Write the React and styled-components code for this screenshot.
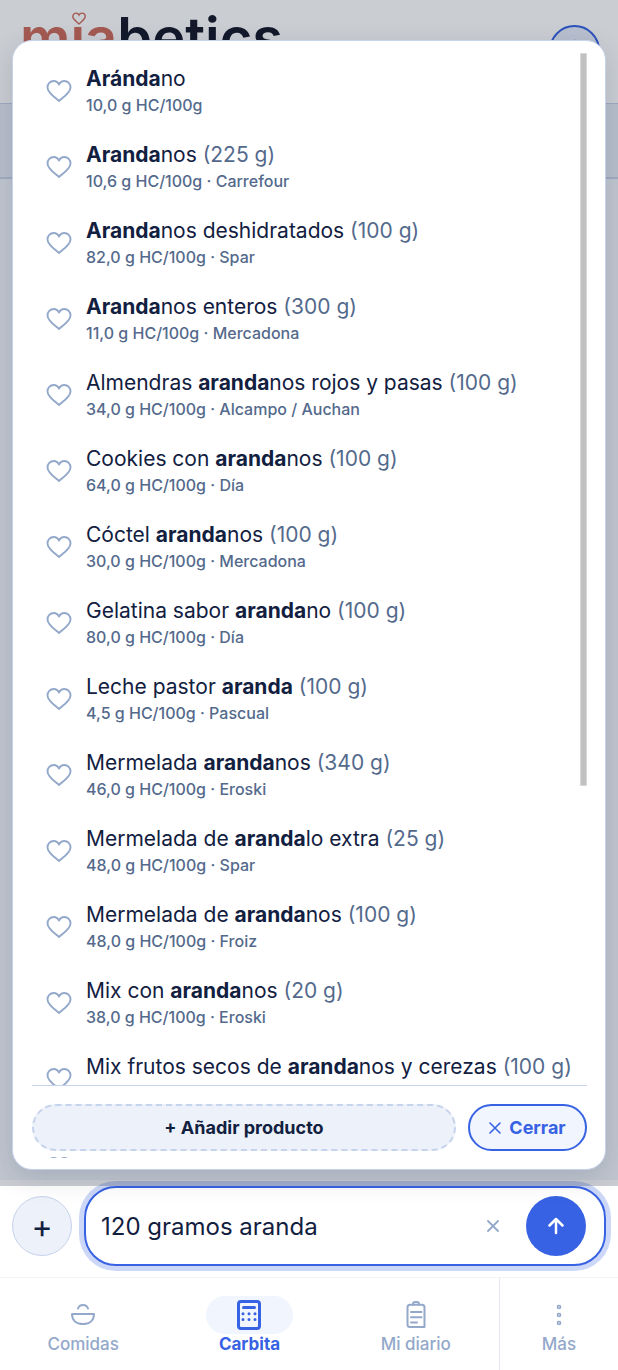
import React from 'react'
import styled, {createGlobalStyle, css} from 'styled-components'

const colors = {
	ink: '#12203f',
	muted: '#546a8c',
	soft: '#93a8ca',
	blue: '#3762e3',
	tint: '#ecf1fa',
	pale: '#f0f5fe',
	line: '#c6d3ec',
}

const Global = createGlobalStyle`
	*, *::before, *::after {
		box-sizing: border-box;
	}
	body {
		margin: 0;
		color: ${colors.ink};
		background: #fff;
		font-family: Inter, "Liberation Sans", sans-serif;
	}
	button, input {
		font: inherit;
		color: inherit;
	}
	button {
		cursor: pointer;
		padding: 0;
	}
	svg {
		display: block;
		flex: none;
	}
`

const Page = styled.div`
	display: flex;
	flex-direction: column;
	height: 100vh;
`

const Stage = styled.div`
	position: relative;
	display: flex;
	flex-direction: column;
	flex: 1;
	min-height: 0;
	background: #f2f6fc;
`

const Header = styled.header`
	display: flex;
	align-items: flex-start;
	justify-content: space-between;
	height: 104px;
	padding: 8px 18px 0 20px;
	background: #fff;
	border-bottom: 1px solid ${colors.line};
`

const Brand = styled.a`
	position: relative;
	color: #15192a;
	font-size: 56px;
	font-weight: 600;
	line-height: 60px;
	text-decoration: none;
`

const BrandAccent = styled.span`
	color: #cf6c5b;
`

const BrandHeart = styled.svg`
	position: absolute;
	top: 4px;
	left: 52px;
`

const Profile = styled.button`
	display: grid;
	place-items: center;
	width: 51px;
	height: 51px;
	margin-top: 17px;
	border: 2px solid ${colors.blue};
	border-radius: 50%;
	color: ${colors.blue};
	background: #e8effc;
`

const Band = styled.div`
	height: 75px;
	background: #e8eef7;
	border-bottom: 2px solid #c9d5e9;
`

const Shade = styled.div`
	position: absolute;
	z-index: 2;
	inset: 0 0 -6px;
	background: rgba(15, 26, 50, 0.22);
	pointer-events: none;
`

const Panel = styled.section`
	position: absolute;
	z-index: 3;
	inset: 40px 12px 10px;
	display: flex;
	padding: 12px 18px 11px 19px;
	border: 1px solid ${colors.line};
	border-radius: 20px;
	background: #fff;
	box-shadow: 0 8px 28px rgba(15, 26, 58, 0.14);
`

const Scroller = styled.div`
	position: relative;
	flex: 1;
	overflow-y: auto;
	scrollbar-width: none;
`

const Thumb = styled.div`
	position: absolute;
	top: 12px;
	right: 18px;
	width: 7px;
	height: 733px;
	border: 1px solid #d8d8d8;
	background: #c1c1c1;
`

const List = styled.ul`
	margin: 0;
	padding: 0;
	list-style: none;
`

const Row = styled.li`
	display: flex;
	align-items: center;
	gap: 14px;
	height: ${p => (p.$tall ? 102 : 76)}px;
	padding-left: 14px;
`

const Favorite = styled.button`
	border: 0;
	color: ${colors.soft};
	background: none;
`

const Name = styled.div`
	font-size: 21px;
	line-height: 28px;
	white-space: nowrap;
	b {
		font-weight: 700;
	}
`

const Amount = styled.span`
	color: ${colors.muted};
`

const Detail = styled.div`
	color: ${colors.muted};
	font-size: 16px;
	font-weight: 500;
	line-height: 24px;
`

const Actions = styled.div`
	position: sticky;
	bottom: 1px;
	display: flex;
	gap: 12px;
	padding: 18px 0 6px;
	border-top: 1px solid ${colors.line};
	background: #fff;
`

const Pill = styled.button`
	display: flex;
	align-items: center;
	justify-content: center;
	gap: 8px;
	height: 47px;
	border-radius: 24px;
	font-size: 18px;
	font-weight: 700;
	${p =>
		p.$close
			? css`
				width: 119px;
				border: 2px solid ${colors.blue};
				color: ${colors.blue};
				background: ${colors.pale};
			`
			: css`
				flex: 1;
				border: 2px dashed ${colors.line};
				background: ${colors.tint};
			`};
`

const Composer = styled.form`
	display: flex;
	gap: 12px;
	padding: 6px 12px 11px;
`

const Round = styled.button`
	display: grid;
	place-items: center;
	flex: none;
	width: 60px;
	height: 60px;
	border: ${p => (p.$send ? '0' : `1px solid ${colors.line}`)};
	border-radius: 50%;
	color: ${p => (p.$send ? '#fff' : colors.ink)};
	background: ${p => (p.$send ? colors.blue : colors.tint)};
`

const Add = styled(Round)`
	margin-top: 10px;
	font-size: 32px;
	font-weight: 400;
`

const Field = styled.div`
	display: flex;
	align-items: center;
	flex: 1;
	min-width: 0;
	height: 80px;
	padding: 0 18px 0 15px;
	border: 2px solid ${colors.blue};
	border-radius: 32px;
	background: #fff;
	box-shadow: 0 0 0 5px #cdd8f8;
`

const Input = styled.input`
	flex: 1;
	min-width: 0;
	padding: 0;
	border: 0;
	outline: 0;
	font-size: 24px;
	background: none;
`

const Clear = styled.button`
	display: grid;
	place-items: center;
	width: 32px;
	height: 32px;
	margin-right: 17px;
	border: 0;
	color: ${colors.soft};
	background: none;
`

const Nav = styled.nav`
	display: flex;
	height: 93px;
	border-top: 1px solid #f2f4f8;
`

const NavItem = styled.a`
	display: flex;
	flex-direction: column;
	align-items: center;
	flex: ${p => (p.$last ? '0 0 119px' : '1')};
	padding-top: 18px;
	border-left: ${p => (p.$last ? '1px solid #e4e7ed' : '0')};
	color: ${p => (p.$active ? colors.blue : colors.soft)};
	font-size: 17px;
	font-weight: ${p => (p.$active ? 700 : 500)};
	line-height: 20px;
	text-decoration: none;
`

const NavIcon = styled.span`
	display: grid;
	place-items: center;
	width: 87px;
	height: 38px;
	border-radius: 20px;
	background: ${p => (p.$active ? colors.pale : 'none')};
`

const heartPath =
	'M13 22 C9.5 18.8 1.5 13.6 1.5 8.4 C1.5 4.8 4.2 2 7.6 2 C9.9 2 12 3.4 13 5.6 C14 3.4 16.1 2 18.4 2 C21.8 2 24.5 4.8 24.5 8.4 C24.5 13.6 16.5 18.8 13 22 Z'

const Heart = () => (
	<svg width="26" height="24" viewBox="0 0 26 24" fill="none" stroke="currentColor" strokeWidth="1.9" strokeLinejoin="round">
		<path d={heartPath} />
	</svg>
)

const Cross = ({width}) => (
	<svg width="12" height="12" viewBox="0 0 12 12" fill="none" stroke="currentColor" strokeWidth={width} strokeLinecap="round">
		<path d="M1 1 L11 11 M11 1 L1 11" />
	</svg>
)

const Bowl = () => (
	<svg width="26" height="24" viewBox="0 0 26 24" fill="none" stroke="currentColor" strokeWidth="2" strokeLinecap="round" strokeLinejoin="round">
		<path d="M2 11 H24 C24 17.5 19.5 21 13 21 C6.5 21 2 17.5 2 11 Z" />
		<path d="M8 5.5 C9.5 0.8 16.5 0.8 18 5.5" />
	</svg>
)

const Calculator = () => (
	<svg width="26" height="32" viewBox="0 0 26 32" fill="none" stroke="currentColor" strokeWidth="3" strokeLinecap="round">
		<rect x="2.5" y="2.5" width="21" height="27" rx="2.5" />
		<path d="M7.5 8.5 H18.5" />
		<path d="M7 14.8 h.01 M13 14.8 h.01 M19 14.8 h.01 M7 20.5 h.01 M13 20.5 h.01 M19 20.5 h.01" />
	</svg>
)

const Clipboard = () => (
	<svg width="20" height="28" viewBox="0 0 20 28" fill="none" stroke="currentColor" strokeWidth="2" strokeLinecap="round" strokeLinejoin="round">
		<path d="M4 3.8 H16 Q18.5 3.8 18.5 6.3 V26 H4 Q1.5 26 1.5 23.5 V6.3 Q1.5 3.8 4 3.8 Z" />
		<path d="M7 3.4 Q7 1 9 1 H11 Q13 1 13 3.4" />
		<path d="M5 11 H15.5 M5 16.2 H15.5 M5 21.5 H11" />
	</svg>
)

const Dots = () => (
	<svg width="8" height="24" viewBox="0 0 8 24" fill="none" stroke="currentColor" strokeWidth="1.7">
		<circle cx="4" cy="4" r="1.5" />
		<circle cx="4" cy="12" r="1.5" />
		<circle cx="4" cy="20" r="1.5" />
	</svg>
)

// name is [before, highlighted, after]
const products = [
	{name: ['', 'Aránda', 'no'], detail: '10,0 g HC/100g'},
	{name: ['', 'Aranda', 'nos'], amount: '225 g', detail: '10,6 g HC/100g · Carrefour'},
	{name: ['', 'Aranda', 'nos deshidratados'], amount: '100 g', detail: '82,0 g HC/100g · Spar'},
	{name: ['', 'Aranda', 'nos enteros'], amount: '300 g', detail: '11,0 g HC/100g · Mercadona'},
	{name: ['Almendras ', 'aranda', 'nos rojos y pasas'], amount: '100 g', detail: '34,0 g HC/100g · Alcampo / Auchan'},
	{name: ['Cookies con ', 'aranda', 'nos'], amount: '100 g', detail: '64,0 g HC/100g · Día'},
	{name: ['Cóctel ', 'aranda', 'nos'], amount: '100 g', detail: '30,0 g HC/100g · Mercadona'},
	{name: ['Gelatina sabor ', 'aranda', 'no'], amount: '100 g', detail: '80,0 g HC/100g · Día'},
	{name: ['Leche pastor ', 'aranda', ''], amount: '100 g', detail: '4,5 g HC/100g · Pascual'},
	{name: ['Mermelada ', 'aranda', 'nos'], amount: '340 g', detail: '46,0 g HC/100g · Eroski'},
	{name: ['Mermelada de ', 'aranda', 'lo extra'], amount: '25 g', detail: '48,0 g HC/100g · Spar'},
	{name: ['Mermelada de ', 'aranda', 'nos'], amount: '100 g', detail: '48,0 g HC/100g · Froiz'},
	{name: ['Mix con ', 'aranda', 'nos'], amount: '20 g', detail: '38,0 g HC/100g · Eroski'},
	{name: ['Mix frutos secos de ', 'aranda', 'nos y cerezas'], amount: '100 g'},
]

const tabs = [
	{label: 'Comidas', Icon: Bowl},
	{label: 'Carbita', Icon: Calculator, active: true},
	{label: 'Mi diario', Icon: Clipboard},
	{label: 'Más', Icon: Dots, last: true},
]

const Product = ({name: [before, match, after], amount, detail}) => (
	<Row>
		<Favorite type="button" aria-label="Favorito">
			<Heart />
		</Favorite>
		<div>
			<Name>
				{before}
				<b>{match}</b>
				{after}
				{amount && <Amount> ({amount})</Amount>}
			</Name>
			<Detail>{detail || '\u00a0'}</Detail>
		</div>
	</Row>
)

const App = () => (
	<Page>
		<Global />
		<Stage>
			<Header>
				<Brand href="#">
					<BrandAccent>mıa</BrandAccent>betics
					<BrandHeart width="14" height="13" viewBox="0 0 26 24" fill="none" stroke="#cf6c5b" strokeWidth="2.6">
						<path d={heartPath} />
					</BrandHeart>
				</Brand>
				<Profile type="button" aria-label="Perfil">
					<svg width="24" height="24" viewBox="0 0 24 24" fill="none" stroke="currentColor" strokeWidth="1.6">
						<circle cx="12" cy="6" r="4.5" />
						<path d="M3 22 C3 11 21 11 21 22" />
					</svg>
				</Profile>
			</Header>
			<Band />
			<Shade />
			<Panel>
				<Scroller>
					<List>
						{products.map(product => (
							<Product key={product.name.join('') + product.amount} {...product} />
						))}
						<Row $tall>
							<Favorite type="button" aria-label="Favorito">
								<Heart />
							</Favorite>
						</Row>
					</List>
					<Actions>
						<Pill type="button">+ Añadir producto</Pill>
						<Pill type="button" $close>
							<Cross width={1.6} />
							Cerrar
						</Pill>
					</Actions>
				</Scroller>
				<Thumb />
			</Panel>
		</Stage>
		<Composer onSubmit={e => e.preventDefault()}>
			<Add type="button" aria-label="Más opciones">
				+
			</Add>
			<Field>
				<Input aria-label="Mensaje" defaultValue="120 gramos aranda" />
				<Clear type="button" aria-label="Borrar">
					<Cross width={1.8} />
				</Clear>
				<Round type="submit" $send aria-label="Enviar">
					<svg width="16" height="18" viewBox="0 0 16 18" fill="none" stroke="currentColor" strokeWidth="2.5" strokeLinecap="round" strokeLinejoin="round">
						<path d="M8 16 V2 M1.5 8.5 L8 2 L14.5 8.5" />
					</svg>
				</Round>
			</Field>
		</Composer>
		<Nav>
			{tabs.map(({label, Icon, active, last}) => (
				<NavItem key={label} href="#" $active={active} $last={last}>
					<NavIcon $active={active}>
						<Icon />
					</NavIcon>
					{label}
				</NavItem>
			))}
		</Nav>
	</Page>
)

export default App
